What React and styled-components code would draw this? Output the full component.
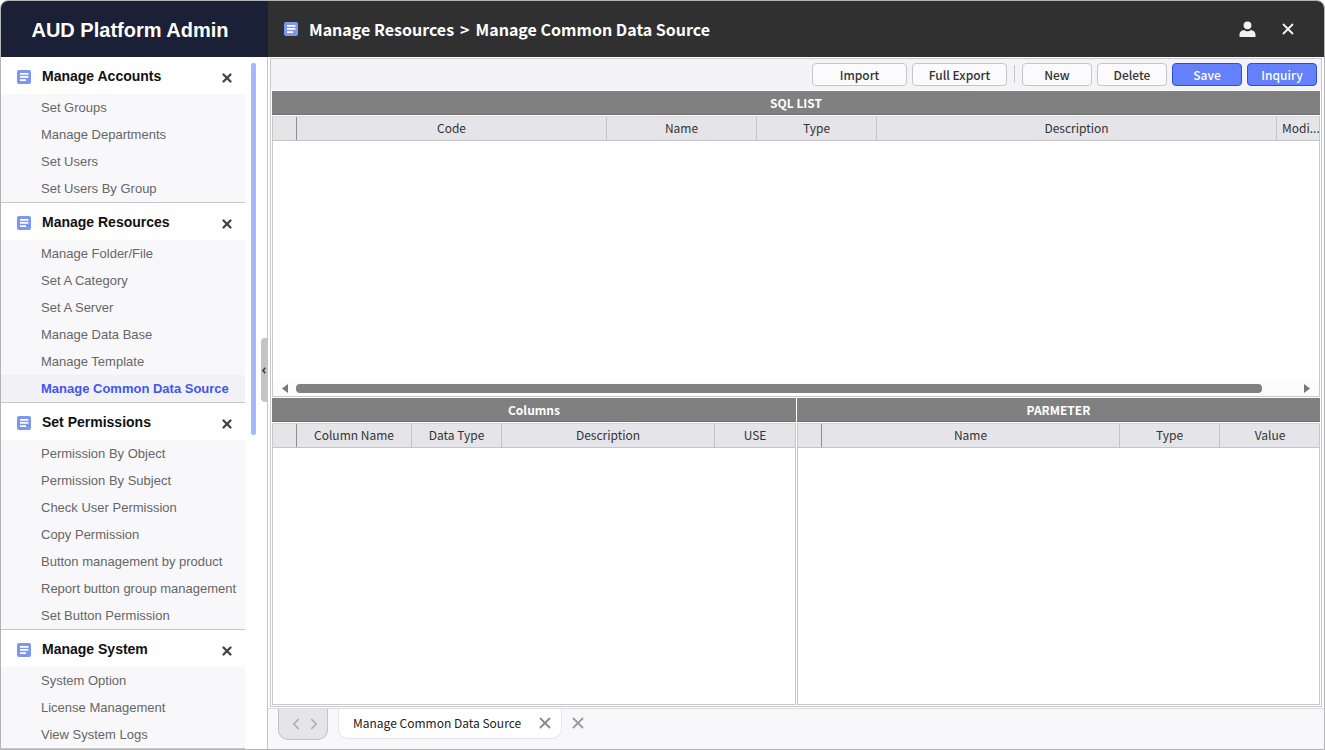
import React from "react"
import styled, { createGlobalStyle } from 'styled-components'
import { X, ChevronLeft, ChevronRight } from 'lucide-react'

const menus = [
  { title: 'Manage Accounts', items: ['Set Groups', 'Manage Departments', 'Set Users', 'Set Users By Group'] },
  { title: 'Manage Resources', items: ['Manage Folder/File', 'Set A Category', 'Set A Server', 'Manage Data Base', 'Manage Template', 'Manage Common Data Source'], active: 'Manage Common Data Source' },
  { title: 'Set Permissions', items: ['Permission By Object', 'Permission By Subject', 'Check User Permission', 'Copy Permission', 'Button management by product', 'Report button group management', 'Set Button Permission'] },
  { title: 'Manage System', items: ['System Option', 'License Management', 'View System Logs'] },
]

const sqlColumns = [['Code', 310], ['Name', 150], ['Type', 120], ['Description', 400], ['Modi...', 43]]
const dataColumns = [['Column Name', 115], ['Data Type', 90], ['Description', 213], ['USE', 80]]
const paramColumns = [['Name', 298], ['Type', 100], ['Value', 100]]

const DocIcon = () => (
  <svg width="14" height="14" viewBox="0 0 14 14">
    <rect width="14" height="14" rx="2" fill="#7d97ee" />
    <path d="M3 3h8.4v1.7H3zM3 6.1h8.4v1.7H3zM3 9.2h6v1.7H3z" fill="#fff" />
  </svg>
)

const UserIcon = () => (
  <svg width="17" height="16" viewBox="0 0 17 16">
    <circle cx="8.5" cy="4.3" r="3.9" fill="#f2f2f2" />
    <path d="M0.5 16v-2.6c0-2.6 2.6-4.2 4.6-4.4 1 .9 2.2 1.3 3.4 1.3s2.4-.4 3.4-1.3c2 .2 4.6 1.8 4.6 4.4V16z" fill="#f2f2f2" />
  </svg>
)

const Caret = ({ left }) => (
  <svg width="6" height="9" viewBox="0 0 6 9">
    <path d={left ? 'M6 0v9L0 4.5z' : 'M0 0v9l6-4.5z'} fill="#777" />
  </svg>
)

const GridTable = ({ columns, children }) => (
  <Grid>
    <GridHead>
      <RowHeader />
      {columns.map(([label, width]) => (
        <HeadCell key={label} style={{ width }}>{label}</HeadCell>
      ))}
    </GridHead>
    <GridBody>{children}</GridBody>
  </Grid>
)

export default function App() {
  return (
    <Page>
      <GlobalStyle />
      <TopBar>
        <Brand>AUD Platform Admin</Brand>
        <TitleArea>
          <DocIcon />
          <PageTitle>Manage Resources<Crumb>&gt;</Crumb>Manage Common Data Source</PageTitle>
          <TopActions>
            <UserIcon />
            <X size={18} strokeWidth={2.4} color="#f2f2f2" />
          </TopActions>
        </TitleArea>
      </TopBar>
      <Body>
        <Sidebar>
          {menus.map(menu => (
            <MenuGroup key={menu.title}>
              <MenuHead>
                <DocIcon />
                <MenuTitle>{menu.title}</MenuTitle>
                <MenuClose size={14} strokeWidth={4} color="#444" />
              </MenuHead>
              <MenuList>
                {menu.items.map(item => (
                  <MenuItem key={item} $active={item === menu.active}>{item}</MenuItem>
                ))}
              </MenuList>
            </MenuGroup>
          ))}
          <SideThumb />
          <CollapseHandle>
            <svg width="4" height="7" viewBox="0 0 4 7">
              <path d="M3.2 .8L1 3.5l2.2 2.7" fill="none" stroke="#3c3c3c" strokeWidth="1.5" />
            </svg>
          </CollapseHandle>
        </Sidebar>
        <Main>
          <Frame>
            <Toolbar>
              <Button>Import</Button>
              <Button>Full Export</Button>
              <ToolDivider />
              <Button $short>New</Button>
              <Button $short>Delete</Button>
              <Button $short $primary>Save</Button>
              <Button $short $primary>Inquiry</Button>
            </Toolbar>
            <TopPanel>
              <PanelTitle>SQL LIST</PanelTitle>
              <GridTable columns={sqlColumns}>
                <HScroll>
                  <Caret left />
                  <HThumb />
                  <Caret />
                </HScroll>
              </GridTable>
            </TopPanel>
            <BottomPanels>
              <Panel>
                <PanelTitle>Columns</PanelTitle>
                <GridTable columns={dataColumns} />
              </Panel>
              <Panel>
                <PanelTitle>PARMETER</PanelTitle>
                <GridTable columns={paramColumns} />
              </Panel>
            </BottomPanels>
          </Frame>
          <TabBar>
            <TabNav>
              <ChevronLeft size={18} strokeWidth={2.2} color="#a9a9b0" />
              <ChevronRight size={18} strokeWidth={2.2} color="#a9a9b0" />
            </TabNav>
            <Tab>
              Manage Common Data Source
              <X size={18} strokeWidth={2.4} color="#8a8a8a" />
            </Tab>
            <X size={18} strokeWidth={2.4} color="#9a9a9a" />
          </TabBar>
        </Main>
      </Body>
    </Page>
  )
}

const GlobalStyle = createGlobalStyle`
  html, body {
    margin: 0;
    padding: 0;
    background: #fff;
  }
  * {
    box-sizing: border-box;
  }
`

const Page = styled.div`
  width: 1325px;
  height: 750px;
  display: flex;
  flex-direction: column;
  border: 1px solid #b4b4b4;
  border-radius: 8px 8px 0 0;
  overflow: hidden;
  background: #fff;
`

const TopBar = styled.header`
  height: 56px;
  flex: none;
  display: flex;
`

const Brand = styled.div`
  width: 267px;
  flex: none;
  padding: 3px 9px 0 0;
  background: #1a2035;
  color: #fff;
  display: flex;
  align-items: center;
  justify-content: center;
  font: 700 20px "Liberation Sans", Arial, sans-serif;
`

const TitleArea = styled.div`
  flex: 1;
  background: #303030;
  display: flex;
  align-items: center;
  padding: 0 27px 0 16px;
`

const PageTitle = styled.h1`
  margin: 0 0 0 11px;
  color: #fff;
  font: 700 16px "Noto Sans CJK KR", "Noto Sans", sans-serif;
`

const Crumb = styled.span`
  margin: 0 6px;
`

const TopActions = styled.div`
  margin-left: auto;
  display: flex;
  align-items: center;
  gap: 23px;
`

const Body = styled.div`
  flex: 1;
  min-height: 0;
  display: flex;
`

const Sidebar = styled.nav`
  position: relative;
  width: 267px;
  flex: none;
  border-right: 1px solid #c4c4c4;
  overflow: hidden;
  background: #fff;
`

const MenuGroup = styled.section`
  width: 244px;
  border-bottom: 1px solid #c8c8c8;
`

const MenuHead = styled.div`
  height: 37px;
  display: flex;
  align-items: center;
  padding: 2px 11px 0 16px;
`

const MenuTitle = styled.span`
  flex: 1;
  margin: 0 0 2px 11px;
  color: #111;
  font: 700 14px "Liberation Sans", Arial, sans-serif;
`

const MenuClose = styled(X)`
  margin-top: 2px;
`

const MenuList = styled.ul`
  list-style: none;
  margin: 0;
  padding: 0;
  background: #f8f8fb;
`

const MenuItem = styled.li`
  height: 27px;
  line-height: 28px;
  padding-left: 40px;
  white-space: nowrap;
  font-family: "Liberation Sans", Arial, sans-serif;
  font-size: 13px;
  font-weight: ${props => props.$active ? 700 : 400};
  color: ${props => props.$active ? '#3f57ee' : '#666'};
  background: ${props => props.$active ? '#f1f1f6' : 'transparent'};
`

const SideThumb = styled.div`
  position: absolute;
  left: 250px;
  top: 6px;
  width: 5px;
  height: 372px;
  border-radius: 2px;
  background: #a3baf9;
`

const CollapseHandle = styled.div`
  position: absolute;
  left: 260px;
  top: 281px;
  width: 6px;
  height: 64px;
  border-radius: 4px 0 0 4px;
  background: #c4c4c4;
  display: flex;
  align-items: center;
  justify-content: center;
`

const Main = styled.main`
  flex: 1;
  min-width: 0;
  display: flex;
  flex-direction: column;
  background: #fff;
`

const Frame = styled.div`
  flex: 1;
  min-height: 0;
  margin: 1px 2px 1px 2px;
  border: 1px solid #c8c8c8;
  padding: 0 1px 1px;
  display: flex;
  flex-direction: column;
`

const Toolbar = styled.div`
  height: 31px;
  flex: none;
  display: flex;
  align-items: center;
  justify-content: flex-end;
  gap: 5px;
  padding: 0 4px 1px 0;
  margin: 0 -1px;
  background: #f4f4f8;
`

const Button = styled.button`
  width: ${props => props.$short ? 70 : 95}px;
  height: 23px;
  padding: 0;
  border-radius: 4px;
  border: 1px solid ${props => props.$primary ? '#2b50d8' : '#c6c6c6'};
  background: ${props => props.$primary ? '#6480fb' : '#fbfbfd'};
  color: ${props => props.$primary ? '#fff' : '#333'};
  font: 500 12px "Noto Sans CJK KR", "Noto Sans", sans-serif;
`

const ToolDivider = styled.span`
  width: 1px;
  height: 18px;
  margin: 0 2px;
  background: #c8c8c8;
`

const TopPanel = styled.div`
  height: 306px;
  flex: none;
  margin-top: 1px;
  display: flex;
  flex-direction: column;
`

const BottomPanels = styled.div`
  flex: 1;
  min-height: 0;
  margin-top: 1px;
  display: flex;
  gap: 1px;
`

const Panel = styled.div`
  flex: 1 1 0;
  min-width: 0;
  display: flex;
  flex-direction: column;
  &:first-child {
    flex: 0 0 524px;
  }
`

const PanelTitle = styled.div`
  height: 24px;
  flex: none;
  background: #808080;
  border-bottom: 1px solid #6f6f6f;
  color: #fff;
  display: flex;
  align-items: center;
  justify-content: center;
  font: 700 12px "Noto Sans CJK KR", "Noto Sans", sans-serif;
`

const Grid = styled.div`
  flex: 1;
  min-height: 0;
  margin-top: 1px;
  border: 1px solid #c8c8c8;
  border-top: 0;
  display: flex;
  flex-direction: column;
`

const GridHead = styled.div`
  height: 25px;
  flex: none;
  display: flex;
  background: #e4e4e9;
  border-top: 1px solid #d8d8dc;
  border-bottom: 1px solid #c4c4c8;
  overflow: hidden;
`

const RowHeader = styled.div`
  width: 24px;
  flex: none;
  border-right: 1px solid #8f8f8f;
`

const HeadCell = styled.div`
  flex: none;
  padding: 0 5px;
  border-right: 1px solid #c4c4c8;
  color: #333;
  text-align: center;
  white-space: nowrap;
  overflow: hidden;
  font: 400 12px/22px "Noto Sans CJK KR", "Noto Sans", sans-serif;
  &:last-child {
    border-right: 0;
  }
`

const GridBody = styled.div`
  flex: 1;
  min-height: 0;
  display: flex;
  flex-direction: column;
  justify-content: flex-end;
  background: #fff;
`

const HScroll = styled.div`
  height: 16px;
  flex: none;
  display: flex;
  align-items: center;
  padding: 0 9px;
  gap: 8px;
  background: #fbfbfb;
`

const HThumb = styled.div`
  width: 966px;
  height: 9px;
  margin-right: 34px;
  border-radius: 4px;
  background: #808080;
`

const TabBar = styled.div`
  height: 41px;
  flex: none;
  display: flex;
  align-items: flex-start;
  padding-left: 10px;
  background: #f8f8fb;
  border-top: 1px solid #dcdcdc;
  > svg {
    margin: 5px 0 0 7px;
  }
`

const TabNav = styled.div`
  width: 50px;
  height: 31px;
  padding-left: 3px;
  border: 1px solid #c4c4c8;
  border-top: 0;
  border-radius: 0 0 10px 10px;
  background: #e4e4e9;
  display: flex;
  align-items: center;
  justify-content: center;
`

const Tab = styled.div`
  width: 224px;
  height: 30px;
  margin-left: 10px;
  padding: 0 7px 2px 14px;
  border: 1px solid #e6e6ea;
  border-top: 0;
  border-radius: 0 0 10px 10px;
  background: #fff;
  color: #222;
  display: flex;
  align-items: center;
  justify-content: space-between;
  white-space: nowrap;
  font: 400 12px "Noto Sans CJK KR", "Noto Sans", sans-serif;
`
